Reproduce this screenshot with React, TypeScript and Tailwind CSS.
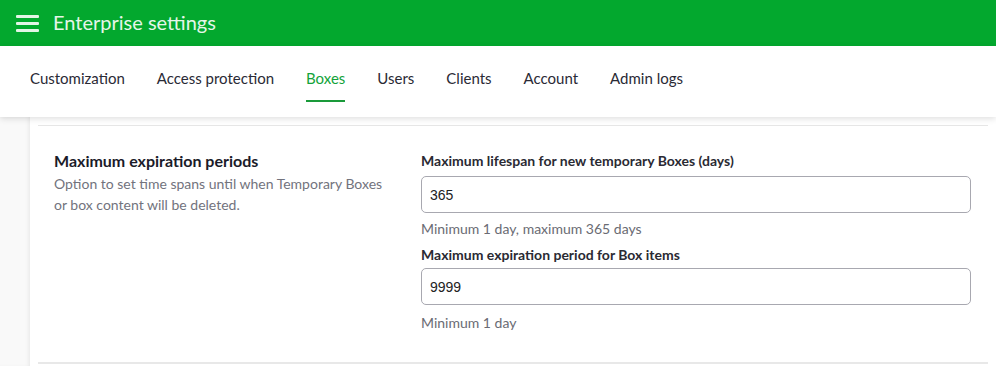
import React from "react";

const tabs = ["Customization", "Access protection", "Boxes", "Users", "Clients", "Account", "Admin logs"];

export default function App() {
  return (
    <div className="w-[996px] h-[366px] overflow-hidden bg-white" style={{ fontFamily: "Lato, 'Open Sans', sans-serif" }}>
      <header className="h-[46px] bg-[#03a82e] flex items-center pl-[16px]">
        <div className="flex flex-col gap-[4px] w-[23px]">
          <span className="block h-[3px] bg-[#e3f5e6] rounded-[1px]" />
          <span className="block h-[3px] bg-[#e3f5e6] rounded-[1px]" />
          <span className="block h-[3px] bg-[#e3f5e6] rounded-[1px]" />
        </div>
        <h1 className="ml-[14px] text-[20px] text-[#e6f6e9] leading-none pb-[2px]">Enterprise settings</h1>
      </header>
      <div className="relative z-10 h-[71px] bg-white shadow-[0_2px_6px_rgba(0,0,0,0.12)] flex items-start pl-[30px] gap-[32px] pt-[22px]">
        {tabs.map((t) => (
          <div key={t} className="flex flex-col">
            <span className={`text-[15px] leading-[20px] ${t === "Boxes" ? "text-[#13a33a]" : "text-[#2a2a35]"}`}>{t}</span>
            {t === "Boxes" && <span className="mt-[12px] h-[2px] bg-[#1a9a3a]" />}
          </div>
        ))}
      </div>
      <div className="flex h-[249px]">
        <div className="w-[30px] bg-[#f9f9f9] shadow-[inset_-3px_0_4px_-2px_rgba(0,0,0,0.08)]" />
        <div className="flex-1 pl-[8px] pr-[8px]">
          <div className="mt-[8px] border-t border-[#e6e6e6]" />
          <div className="flex pl-[16px] pt-[24px] h-[238px] border-b-2 border-[#e8e8e8]">
            <div className="w-[367px]">
              <h2 className="text-[16px] font-bold text-[#1b1b29] leading-[22px]">Maximum expiration periods</h2>
              <p className="text-[14px] text-[#72737d] leading-[21px] mt-[1px]">
                Option to set time spans until when Temporary Boxes
                <br />
                or box content will be deleted.
              </p>
            </div>
            <div className="w-[550px] pt-[2px]">
              <label className="block text-[14px] font-bold text-[#2a2a33] leading-[18px]">Maximum lifespan for new temporary Boxes (days)</label>
              <input
                defaultValue="365"
                className="mt-[6px] w-[550px] h-[37px] border border-[#a8a8b0] rounded-[5px] px-[8px] text-[14px] text-[#222] outline-none"
                style={{ fontFamily: "'Liberation Sans', Arial, sans-serif" }}
              />
              <p className="mt-[6px] text-[14px] text-[#6a6b73] leading-[20px]">Minimum 1 day, maximum 365 days</p>
              <label className="block mt-[7px] text-[14px] font-bold text-[#2a2a33] leading-[18px]">Maximum expiration period for Box items</label>
              <input
                defaultValue="9999"
                className="mt-[4px] w-[550px] h-[37px] border border-[#a8a8b0] rounded-[5px] px-[8px] text-[14px] text-[#222] outline-none"
                style={{ fontFamily: "'Liberation Sans', Arial, sans-serif" }}
              />
              <p className="mt-[8px] text-[14px] text-[#6a6b73] leading-[20px]">Minimum 1 day</p>
            </div>
          </div>
        </div>
      </div>
    </div>
  );
}
